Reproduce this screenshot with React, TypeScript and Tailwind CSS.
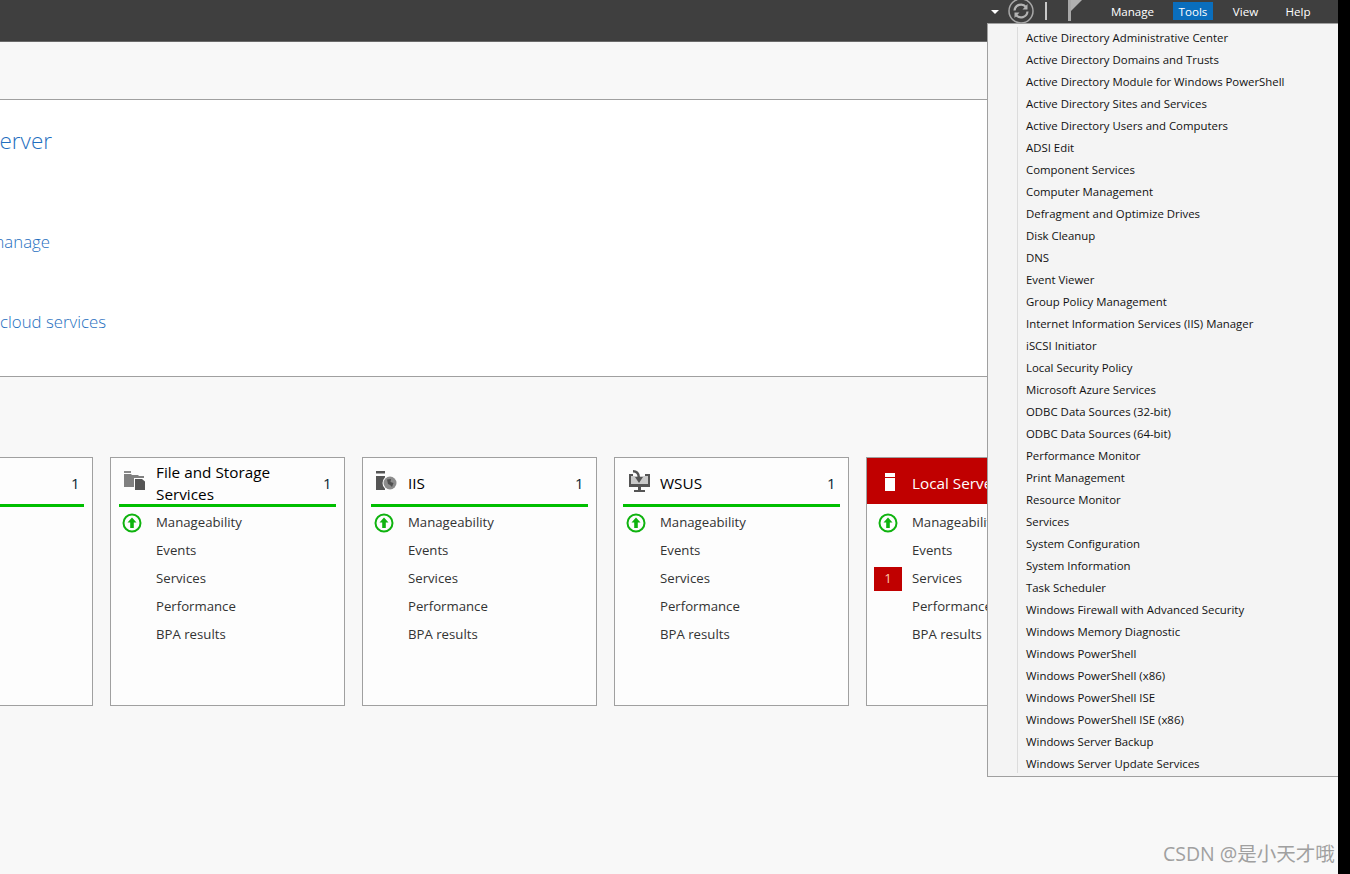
import React from "react";

const tools = [
  "Active Directory Administrative Center",
  "Active Directory Domains and Trusts",
  "Active Directory Module for Windows PowerShell",
  "Active Directory Sites and Services",
  "Active Directory Users and Computers",
  "ADSI Edit",
  "Component Services",
  "Computer Management",
  "Defragment and Optimize Drives",
  "Disk Cleanup",
  "DNS",
  "Event Viewer",
  "Group Policy Management",
  "Internet Information Services (IIS) Manager",
  "iSCSI Initiator",
  "Local Security Policy",
  "Microsoft Azure Services",
  "ODBC Data Sources (32-bit)",
  "ODBC Data Sources (64-bit)",
  "Performance Monitor",
  "Print Management",
  "Resource Monitor",
  "Services",
  "System Configuration",
  "System Information",
  "Task Scheduler",
  "Windows Firewall with Advanced Security",
  "Windows Memory Diagnostic",
  "Windows PowerShell",
  "Windows PowerShell (x86)",
  "Windows PowerShell ISE",
  "Windows PowerShell ISE (x86)",
  "Windows Server Backup",
  "Windows Server Update Services",
];

const UpIcon = () => (
  <svg width="20" height="20" viewBox="0 0 20 20" fill="none">
    <circle cx="10" cy="10" r="8.5" stroke="#0fb30f" strokeWidth="2" />
    <path d="M10 4.5 L14.5 9.5 H11.8 V15 H8.2 V9.5 H5.5 Z" fill="#0fb30f" />
  </svg>
);

const FilesIcon = () => (
  <svg width="23" height="20" viewBox="0 0 23 20">
    <path d="M1 0 H8 V2 H1 Z" fill="#8a8a8a" />
    <path d="M1 3 H8 L9 4 H15 L16 5 H21 V7 H11 V16 H1 Z" fill="#808080" />
    <path d="M12 8 H19 L22 10.5 V19 H12 Z" fill="#555555" />
  </svg>
);

const IisIcon = () => (
  <svg width="22" height="20" viewBox="0 0 22 20">
    <rect x="1" y="0" width="9" height="2.5" fill="#555555" />
    <rect x="1" y="5" width="9" height="14" fill="#555555" />
    <circle cx="15" cy="12" r="7.5" fill="#fdfdfd" />
    <circle cx="15" cy="12" r="6.5" fill="#8c8c8c" />
    <path d="M12 8.5 L16 8 L15.5 11 L18.5 12 L17 16 L15 14 L13 13 Z" fill="#4f4f4f" />
  </svg>
);

const WsusIcon = () => (
  <svg width="24" height="23" viewBox="0 0 24 23">
    <path d="M2 4 H6 V6 H4 V14 H21 V6 H18 V4 H23 V17 H2 Z" fill="#555555" />
    <rect x="11" y="17" width="3" height="3" fill="#555555" />
    <rect x="7" y="20" width="11" height="2" fill="#555555" />
    <rect x="4" y="6" width="17" height="8" fill="#c9c9c9" />
    <path d="M6 0 Q12.5 0 13 7 H16 L12 13 L8 7 H10.5 Q10.5 2.5 6 2.5 Z" fill="#555555" />
  </svg>
);

const ServerIcon = () => (
  <svg width="10" height="18" viewBox="0 0 10 18">
    <rect x="0" y="0" width="10" height="4" fill="#ffffff" />
    <rect x="0" y="5" width="10" height="13" fill="#ffffff" />
  </svg>
);

const RefreshIcon = () => (
  <svg width="26" height="26" viewBox="0 0 26 26" fill="none">
    <circle cx="13" cy="13" r="12" stroke="#a8a8a8" strokeWidth="1.5" />
    <path d="M6.5 12.5 A6.5 6.5 0 0 1 18 9" stroke="#b4b4b4" strokeWidth="2.2" />
    <path d="M19.5 13.5 A6.5 6.5 0 0 1 8 17" stroke="#b4b4b4" strokeWidth="2.2" />
    <path d="M19.5 6 V11.5 H14.5 Z" fill="#b4b4b4" />
    <path d="M6.5 20 V14.5 H11.5 Z" fill="#b4b4b4" />
  </svg>
);

const FlagIcon = () => (
  <svg width="18" height="22" viewBox="0 0 18 22">
    <rect x="0" y="0" width="3" height="21" fill="#a8a8a8" />
    <path d="M3 0 H14 L3 11 Z" fill="#b0b0b0" />
  </svg>
);

type CardProps = {
  title: React.ReactNode;
  icon?: React.ReactNode;
  count?: string;
  alert?: boolean;
};

const rows = ["Manageability", "Events", "Services", "Performance", "BPA results"];

const Card = ({ title, icon, count, alert }: CardProps) => (
  <div className="w-[235px] h-[249px] shrink-0 border border-[#a0a0a0] bg-[#fdfdfd]">
    <div className={alert ? "bg-[#c00000] h-[46px] flex items-center text-white" : "mx-2 h-[49px] border-b-[3px] border-[#00bf00] flex items-center text-black"}>
      <div className={alert ? "w-[45px] pl-[18px] pt-px flex justify-start" : "w-[37px] pl-1 flex justify-start shrink-0"}>{icon}</div>
      <div className="flex-1 mt-[4px] text-[15.3px] leading-[22px]">{title}</div>
      {count && <div className="w-[13px] mt-[4px] text-[15px] text-[#0b1f33]">{count}</div>}
    </div>
    <div className={alert ? "pt-[5px]" : "pt-[2px]"}>
      {rows.map((r, i) => (
        <div key={r} className="h-[28px] flex items-center text-[13.2px] text-[#333333]">
          <div className="w-[45px] pr-[3px] flex justify-center shrink-0">
            {i === 0 && <UpIcon />}
            {alert && i === 2 && (
              <div className="w-7 h-6 bg-[#c00000] text-[#ffc9a8] flex items-center justify-center text-[13px]">1</div>
            )}
          </div>
          <span className="whitespace-nowrap">{r}</span>
        </div>
      ))}
    </div>
  </div>
);

const Link = ({ text, className }: { text: string; className: string }) => (
  <div className={`flex justify-end whitespace-nowrap text-[#1f6fc0] font-light ${className}`}>{text}</div>
);

export default function App() {
  return (
    <div
      className="relative w-[1350px] h-[874px] overflow-hidden flex bg-black"
      style={{ fontFamily: '"Open Sans", "Noto Sans CJK SC", sans-serif' }}
    >
      <div className="relative w-[1338px] h-full overflow-hidden bg-[#f8f8f8] flex flex-col">
        <div className="h-[42px] bg-[#3f3f3f] shrink-0 flex items-start justify-end border-b border-[#6a6a6a]">
          <div className="flex items-start mr-[27px] text-[11.6px] text-white">
            <div className="w-0 h-0 mt-[10px] mr-[9px] border-x-[4px] border-x-transparent border-t-[4px] border-t-white" />
            <div className="-mt-[2px] mr-[11px]"><RefreshIcon /></div>
            <div className="w-[2px] h-[18px] mt-[2px] mr-[21px] bg-[#c8c8c8]" />
            <div className="mr-[24.5px]"><FlagIcon /></div>
            <div className="w-[44px] mr-[18.5px] mt-[3px] h-[18px] leading-[18px] text-center">Manage</div>
            <div className="w-[40px] mr-[19.5px] mt-[2px] pt-px h-[18px] leading-[18px] text-center bg-[#0a6ebd]">Tools</div>
            <div className="w-[26px] mr-[26.5px] mt-[3px] h-[18px] leading-[18px] text-center">View</div>
            <div className="w-[26px] mt-[3px] h-[18px] leading-[18px] text-center">Help</div>
          </div>
        </div>

        <div className="h-[57px] shrink-0" />

        <div className="h-[278px] shrink-0 bg-white border-y border-[#a0a0a0] leading-[28px]">
          <div className="h-[27px]" />
          <Link text="Configure this local server" className="w-[52px] text-[22.5px]" />
          <Link text="Add other servers to manage" className="w-[50px] text-[16.8px] mt-[73px]" />
          <Link text="Connect this server to cloud services" className="w-[106px] text-[16.8px] mt-[52px]" />
        </div>

        <div className="flex gap-[17px] ml-[-142px] mt-[80px]">
          <Card title="" count="1" />
          <Card title={<>File and Storage<br />Services</>} icon={<FilesIcon />} count="1" />
          <Card title="IIS" icon={<IisIcon />} count="1" />
          <Card title="WSUS" icon={<WsusIcon />} count="1" />
          <Card title="Local Server" icon={<ServerIcon />} alert />
        </div>

        <div className="absolute left-[987px] top-[23px] w-[360px] h-[754px] bg-[#f4f4f4] border border-[#a0a0a0] py-[3px] flex text-[11.4px] text-[#111111]">
          <div className="w-[30px] border-r border-[#dcdcdc] shrink-0" />
          <div className="pl-[8px]">
            {tools.map((t) => (
              <div key={t} className="h-[22px] leading-[22px] whitespace-nowrap">{t}</div>
            ))}
          </div>
        </div>
      </div>
      <div className="absolute left-[1163px] top-[841px] text-[19.5px] leading-[26px] text-[#a0a0a0] whitespace-nowrap">CSDN @是小天才哦</div>
    </div>
  );
}
